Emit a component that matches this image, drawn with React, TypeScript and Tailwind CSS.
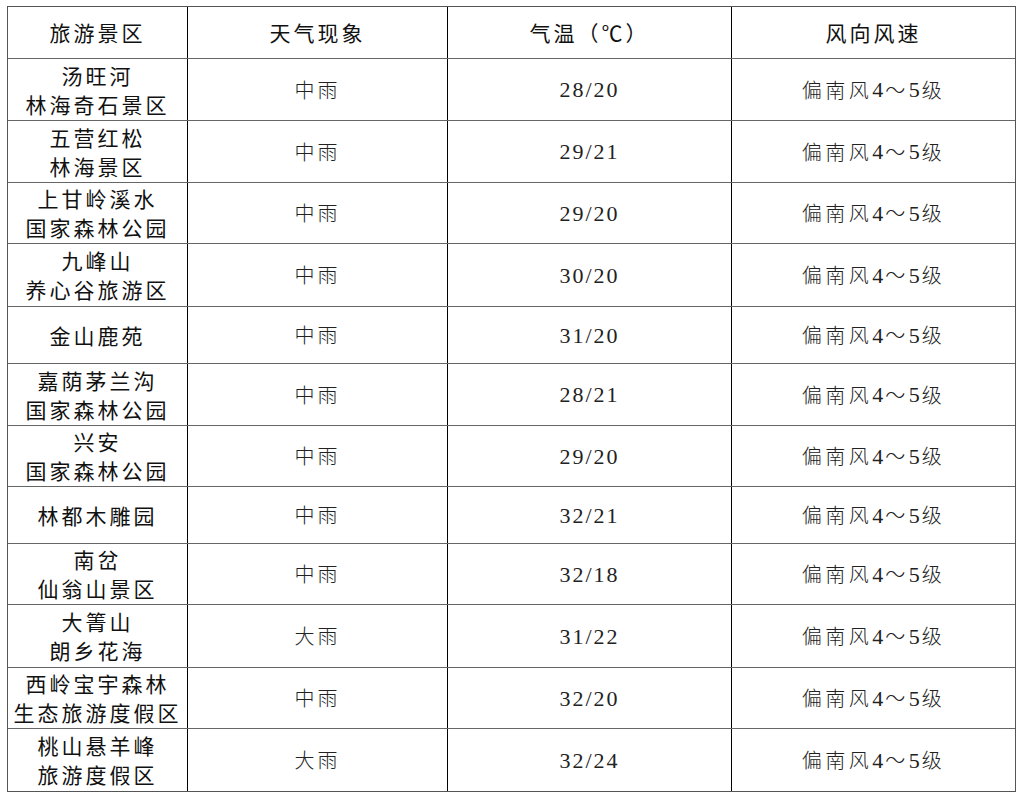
const rows = [
  { name: ["汤旺河", "林海奇石景区"], weather: "中雨", temp: "28/20", h: "h-[62px]" },
  { name: ["五营红松", "林海景区"], weather: "中雨", temp: "29/21", h: "h-[62px]" },
  { name: ["上甘岭溪水", "国家森林公园"], weather: "中雨", temp: "29/20", h: "h-[61px]" },
  { name: ["九峰山", "养心谷旅游区"], weather: "中雨", temp: "30/20", h: "h-[63px]" },
  { name: ["金山鹿苑"], weather: "中雨", temp: "31/20", h: "h-[57px]" },
  { name: ["嘉荫茅兰沟", "国家森林公园"], weather: "中雨", temp: "28/21", h: "h-[62px]" },
  { name: ["兴安", "国家森林公园"], weather: "中雨", temp: "29/20", h: "h-[61px]" },
  { name: ["林都木雕园"], weather: "中雨", temp: "32/21", h: "h-[57px]" },
  { name: ["南岔", "仙翁山景区"], weather: "中雨", temp: "32/18", h: "h-[61px]" },
  { name: ["大箐山", "朗乡花海"], weather: "大雨", temp: "31/22", h: "h-[63px]" },
  { name: ["西岭宝宇森林", "生态旅游度假区"], weather: "中雨", temp: "32/20", h: "h-[61px]" },
  { name: ["桃山悬羊峰", "旅游度假区"], weather: "大雨", temp: "32/24", h: "h-[62px]" },
];

const cjk = "font-['Noto_Sans_CJK_SC',sans-serif]";

export default function App() {
  return (
    <div className="w-[1023px] h-[795px] bg-white pl-[7px] pt-[6px]">
      <div className="w-[1009px] border border-[#555] text-[#111]">
        <div className="grid grid-cols-[180px_260px_284px_283px] h-[52px] border-b border-[#666]">
          <div className={`flex items-center justify-center border-r border-black text-[21px] tracking-[3px] ${cjk}`}>旅游景区</div>
          <div className={`flex items-center justify-center border-r border-black text-[21px] tracking-[3px] ${cjk}`}>天气现象</div>
          <div className={`flex items-center justify-center border-r border-black text-[21px] tracking-[3px] ${cjk}`}>气温（℃）</div>
          <div className={`flex items-center justify-center text-[21px] tracking-[3px] ${cjk}`}>风向风速</div>
        </div>
        {rows.map((r, i) => (
          <div
            key={i}
            className={`grid grid-cols-[180px_260px_284px_283px] ${r.h} ${i < rows.length - 1 ? "border-b border-[#666]" : ""}`}
          >
            <div className={`flex flex-col items-center justify-center border-r border-black text-[21px] leading-[29px] tracking-[3px] ${cjk}`}>
              {r.name.map((n) => (
                <div key={n}>{n}</div>
              ))}
            </div>
            <div className={`flex items-center justify-center border-r border-black text-[20px] font-light tracking-[3px] text-[#222] ${cjk}`}>
              {r.weather}
            </div>
            <div className="flex items-center justify-center border-r border-black text-[22px] tracking-[2px] text-[#222] font-['Liberation_Serif',serif]">
              {r.temp}
            </div>
            <div className={`flex items-center justify-center text-[20px] font-light tracking-[3.5px] text-[#222] ${cjk}`}>
              偏南风<span className="font-['Liberation_Serif',serif] text-[22px] font-normal tracking-[2px]">4</span>～<span className="font-['Liberation_Serif',serif] text-[22px] font-normal tracking-[2px]">5</span>级
            </div>
          </div>
        ))}
      </div>
    </div>
  );
}
